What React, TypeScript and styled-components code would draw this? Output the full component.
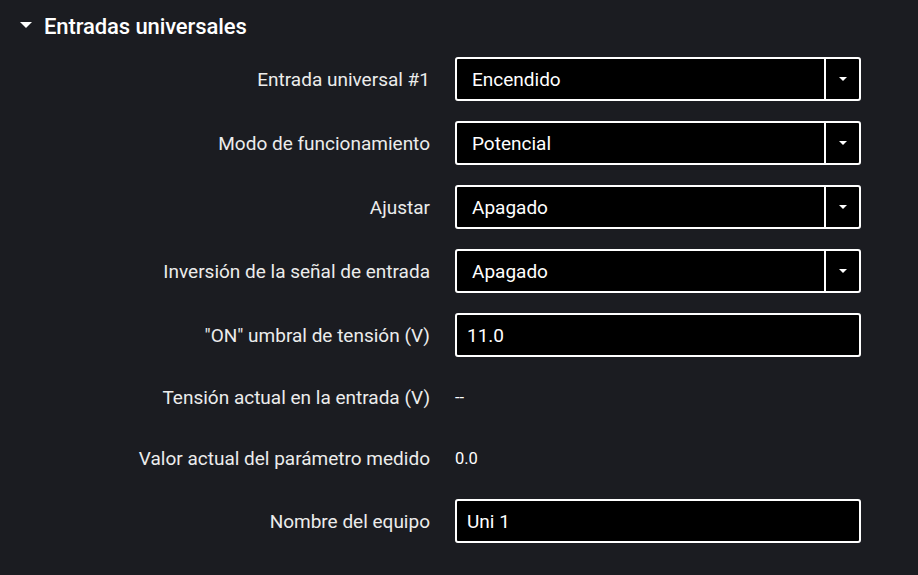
import styled, { createGlobalStyle } from "styled-components";

const GlobalStyle = createGlobalStyle`
  html, body {
    margin: 0;
    padding: 0;
    background: #1b1c21;
  }
  body {
    font-family: Roboto, "Liberation Sans", sans-serif;
    color: #ececec;
  }
`;

type Field =
  | { label: string; kind: "select"; value: string }
  | { label: string; kind: "input"; value: string }
  | { label: string; kind: "text"; value: string };

const fields: Field[] = [
  { label: "Entrada universal #1", kind: "select", value: "Encendido" },
  { label: "Modo de funcionamiento", kind: "select", value: "Potencial" },
  { label: "Ajustar", kind: "select", value: "Apagado" },
  { label: "Inversión de la señal de entrada", kind: "select", value: "Apagado" },
  { label: "\"ON\" umbral de tensión (V)", kind: "input", value: "11.0" },
  { label: "Tensión actual en la entrada (V)", kind: "text", value: "--" },
  { label: "Valor actual del parámetro medido", kind: "text", value: "0.0" },
  { label: "Nombre del equipo", kind: "input", value: "Uni 1" },
];

export default function App() {
  return (
    <>
      <GlobalStyle />
      <Page>
        <SectionHeader>
          <Caret viewBox="0 0 12 6" aria-hidden>
            <path d="M0 0 H12 L6 6 Z" fill="#ffffff" />
          </Caret>
          <Title>Entradas universales</Title>
        </SectionHeader>
        <Form>
          {fields.map((f) => (
            <Row key={f.label}>
              <Label>{f.label}</Label>
              {f.kind === "select" && (
                <Select>
                  <SelectValue>{f.value}</SelectValue>
                  <SelectButton>
                    <svg width="8" height="4" viewBox="0 0 8 4" aria-hidden>
                      <path d="M0 0 H8 L4 4 Z" fill="#ffffff" />
                    </svg>
                  </SelectButton>
                </Select>
              )}
              {f.kind === "input" && <TextInput defaultValue={f.value} />}
              {f.kind === "text" && <StaticValue>{f.value}</StaticValue>}
            </Row>
          ))}
        </Form>
      </Page>
    </>
  );
}

const Page = styled.div`
  padding: 11px 0 0 0;
  width: 918px;
  height: 575px;
  box-sizing: border-box;
`;

const SectionHeader = styled.div`
  display: flex;
  align-items: center;
  gap: 12px;
  height: 30px;
  padding-left: 20px;
  margin-bottom: 16px;
`;

const Caret = styled.svg`
  width: 12px;
  height: 6px;
  margin-top: -2px;
`;

const Title = styled.h2`
  margin: 0;
  font-size: 22px;
  font-weight: 500;
  color: #ffffff;
  letter-spacing: -0.1px;
`;

const Form = styled.div`
  display: grid;
  grid-template-columns: 430px 406px;
  column-gap: 25px;
  row-gap: 20px;
`;

const Row = styled.div`
  display: contents;
`;

const Label = styled.div`
  display: flex;
  align-items: center;
  justify-content: flex-end;
  min-height: 41px;
  font-size: 19px;
  color: #ececec;
  text-align: right;
`;

const Select = styled.div`
  display: flex;
  align-items: stretch;
  height: 44px;
  box-sizing: border-box;
  background: #000000;
  border: 2px solid #ffffff;
  border-radius: 3px;
`;

const SelectValue = styled.div`
  flex: 1;
  display: flex;
  align-items: center;
  padding-left: 15px;
  font-size: 19px;
  color: #ffffff;
`;

const SelectButton = styled.div`
  width: 33px;
  display: flex;
  align-items: center;
  justify-content: center;
  border-left: 2px solid #ffffff;
`;

const TextInput = styled.input`
  height: 44px;
  box-sizing: border-box;
  background: #000000;
  border: 2px solid #ffffff;
  border-radius: 3px;
  padding: 0 10px;
  font-family: Roboto, "Liberation Sans", sans-serif;
  font-size: 19px;
  color: #ffffff;
  outline: none;
`;

const StaticValue = styled.div`
  display: flex;
  align-items: center;
  font-size: 16.5px;
  color: #ffffff;
`;
